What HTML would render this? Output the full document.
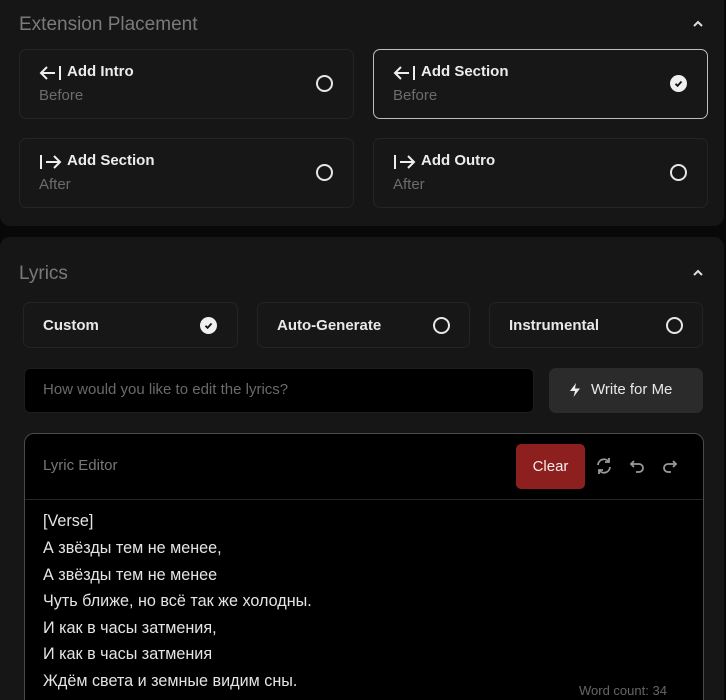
<!DOCTYPE html>
<html><head><meta charset="utf-8"><style>
*{box-sizing:border-box;margin:0;padding:0}
html,body{width:726px;height:700px;overflow:hidden}
body{background:#080808;font-family:"Liberation Sans",sans-serif;position:relative;color:#e8e8e8}
.panel{position:absolute;left:0;width:724px;background:#161616;border-radius:10px}
.abs{position:absolute}
.card{position:absolute;width:335px;height:70px;border:1px solid #242424;border-radius:7px;background:#171717}
.card.sel{border:1.5px solid #bdbdbd}
.card .t{position:absolute;left:47px;top:13px;font-size:15px;font-weight:bold;color:#ececec}
.card svg.ar{position:absolute;left:19px;top:15px}
.card .s{position:absolute;left:19px;top:37px;font-size:15px;color:#6c6c6c}
.radio{position:absolute;width:17px;height:17px;border:2px solid #e6e6e6;border-radius:50%}
.check{position:absolute;width:17px;height:17px;border-radius:50%;background:#f0f0f0}
.btn{position:absolute;top:302px;height:46px;border:1px solid #242424;border-radius:7px;background:#171717}
.btn span{position:absolute;left:19px;top:14px;font-size:15px;font-weight:bold;color:#e8e8e8}
.lyr{position:absolute;left:43px;font-size:16.5px;color:#e4e4e4;transform:scaleX(0.98);transform-origin:left;white-space:nowrap}
</style></head><body>
<div class="panel" style="top:-10px;height:236px"></div>
<div class="abs" style="left:19px;top:14px;font-size:19px;color:#7a7a7a">Extension Placement</div>
<svg class="abs" style="left:692px;top:20px" width="12" height="8" viewBox="0 0 12 8"><path d="M2 6L6 2L10 6" stroke="#ddd" stroke-width="2" fill="none"/></svg>

<div class="card" style="left:19px;top:49px"><svg class="ar" width="24" height="16" viewBox="0 0 24 16"><path d="M2 8H16M8 2L2 8L8 14M21 1V15" stroke="#eee" stroke-width="2" fill="none"/></svg><div class="t">Add Intro</div><div class="s">Before</div><div class="radio" style="left:296px;top:25px"></div></div>
<div class="card sel" style="left:373px;top:49px"><svg class="ar" width="24" height="16" viewBox="0 0 24 16"><path d="M2 8H16M8 2L2 8L8 14M21 1V15" stroke="#eee" stroke-width="2" fill="none"/></svg><div class="t">Add Section</div><div class="s">Before</div><div class="check" style="left:296px;top:25px"><svg width="17" height="17"><path d="M5.5 8.8L7.6 10.8L11.5 6.5" stroke="#111" stroke-width="1.8" fill="none"/></svg></div></div>
<div class="card" style="left:19px;top:138px"><svg class="ar" width="24" height="16" viewBox="0 0 24 16"><path d="M2 1V15M7 8H21M15 2L21 8L15 14" stroke="#eee" stroke-width="2" fill="none"/></svg><div class="t">Add Section</div><div class="s">After</div><div class="radio" style="left:296px;top:25px"></div></div>
<div class="card" style="left:373px;top:138px"><svg class="ar" width="24" height="16" viewBox="0 0 24 16"><path d="M2 1V15M7 8H21M15 2L21 8L15 14" stroke="#eee" stroke-width="2" fill="none"/></svg><div class="t">Add Outro</div><div class="s">After</div><div class="radio" style="left:296px;top:25px"></div></div>

<div class="panel" style="top:237px;height:480px"></div>
<div class="abs" style="left:19px;top:263px;font-size:19px;color:#7a7a7a">Lyrics</div>
<svg class="abs" style="left:692px;top:269px" width="12" height="8" viewBox="0 0 12 8"><path d="M2 6L6 2L10 6" stroke="#ddd" stroke-width="2" fill="none"/></svg>

<div class="btn" style="left:23px;width:215px"><span>Custom</span><div class="check" style="left:176px;top:14px"><svg width="17" height="17"><path d="M5.5 8.8L7.6 10.8L11.5 6.5" stroke="#111" stroke-width="1.8" fill="none"/></svg></div></div>
<div class="btn" style="left:257px;width:213px"><span>Auto-Generate</span><div class="radio" style="left:175px;top:14px"></div></div>
<div class="btn" style="left:489px;width:214px"><span>Instrumental</span><div class="radio" style="left:176px;top:14px"></div></div>

<div class="abs" style="left:24px;top:368px;width:510px;height:45px;background:#000;border-radius:6px;border:1px solid #1d1d1d"></div>
<div class="abs" style="left:43px;top:381px;font-size:15px;color:#6a6a6a">How would you like to edit the lyrics?</div>
<div class="abs" style="left:549px;top:368px;width:154px;height:45px;background:#2b2b2b;border-radius:7px"></div>
<svg class="abs" style="left:568px;top:382px" width="14" height="16" viewBox="0 0 14 16"><path d="M8 1L2 9H7L5.5 15L12 6.5H7Z" fill="#eee"/></svg>
<div class="abs" style="left:591px;top:381px;font-size:15px;color:#e8e8e8">Write for Me</div>

<div class="abs" style="left:24px;top:433px;width:680px;height:290px;background:#000;border:1px solid #4a4a4a;border-radius:10px"></div>
<div class="abs" style="left:25px;top:499px;width:678px;height:1px;background:#262626"></div>
<div class="abs" style="left:43px;top:457px;font-size:15px;color:#777">Lyric Editor</div>
<div class="abs" style="left:516px;top:444px;width:69px;height:45px;background:#8e1f1f;border-radius:5px;font-size:15px;color:#eee;text-align:center;line-height:45px">Clear</div>
<svg class="abs" style="left:594px;top:456px" width="20" height="20" viewBox="0 0 20 20" fill="none" stroke="#999" stroke-width="1.8"><path d="M4 9A6 6 0 0 1 15 6M16 11A6 6 0 0 1 5 14"/><path d="M15 2V6H11M5 18V14H9"/></svg>
<svg class="abs" style="left:628px;top:457px" width="18" height="18" viewBox="0 0 18 18" fill="none" stroke="#999" stroke-width="1.8"><path d="M6 4L3 7L6 10M3 7H11A4 4 0 0 1 11 15H8"/></svg>
<svg class="abs" style="left:661px;top:457px" width="18" height="18" viewBox="0 0 18 18" fill="none" stroke="#999" stroke-width="1.8"><path d="M12 4L15 7L12 10M15 7H7A4 4 0 0 0 7 15H10"/></svg>

<div class="lyr" style="top:512px">[Verse]</div>
<div class="lyr" style="top:539px">А звёзды тем не менее,</div>
<div class="lyr" style="top:566px">А звёзды тем не менее</div>
<div class="lyr" style="top:592px">Чуть ближе, но всё так же холодны.</div>
<div class="lyr" style="top:619px">И как в часы затмения,</div>
<div class="lyr" style="top:645px">И как в часы затмения</div>
<div class="lyr" style="top:672px">Ждём света и земные видим сны.</div>
<div class="abs" style="left:579px;top:683px;font-size:13px;color:#666">Word count: 34</div>
</body></html>
